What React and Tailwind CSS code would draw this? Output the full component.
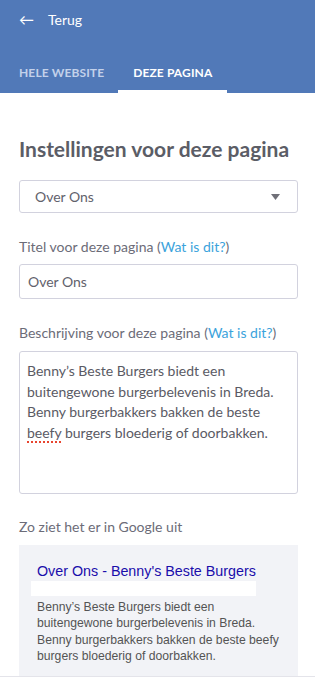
const LINK = "text-[#3ba3dc]";

function Label({ children }) {
  return (
    <p className="text-[14px] leading-5 text-[#6c6c78]">
      {children} (<span className={LINK}>Wat is dit?</span>)
    </p>
  );
}

export default function App() {
  return (
    <div className="w-[315px] min-h-[679px] bg-white font-['Lato',sans-serif]">
      {/* Header */}
      <div className="bg-[#5179b8] h-[93px] flex flex-col">
        <div className="flex items-center h-[38px] pl-[19px] text-white">
          <span className="text-[15px] w-[29px] leading-none">←</span>
          <span className="text-[14px]">Terug</span>
        </div>
        <div className="flex mt-auto h-[40px] text-[12px] font-bold tracking-[0.01em]">
          <div className="pl-[19px] pr-[14px] flex items-center text-[#c3d1ea]">HELE WEBSITE</div>
          <div className="relative flex items-center px-[15px] text-white">
            DEZE PAGINA
            <span className="absolute left-0 right-0 bottom-0 h-[3px] bg-white" />
          </div>
        </div>
      </div>

      {/* Body */}
      <div className="pl-[19px] pr-[17px] pt-[44px]">
        <h1 className="text-[21px] font-bold text-[#5b5d66] leading-6">Instellingen voor deze pagina</h1>

        <div className="mt-[19px] h-[33px] border border-[#d2d2de] rounded-[3px] flex items-center justify-between pl-[15px] pr-[17px]">
          <span className="text-[14px] text-[#62626c]">Over Ons</span>
          <svg width="9" height="6" viewBox="0 0 9 6"><path d="M0 0h9L4.5 6z" fill="#707078" /></svg>
        </div>

        <div className="mt-[24px]">
          <Label>Titel voor deze pagina</Label>
        </div>
        <div className="mt-[7px] h-[35px] border border-[#d2d2de] rounded-[3px] flex items-center pl-[8px]">
          <span className="text-[14px] text-[#62626c]">Over Ons</span>
        </div>

        <div className="mt-[24px]">
          <Label>Beschrijving voor deze pagina</Label>
        </div>
        <div className="mt-[8px] h-[143px] border border-[#d2d2de] rounded-[3px] px-[7px] pt-[9px] text-[14px] leading-[20.5px] text-[#5a5a64]">
          Benny’s Beste Burgers biedt een buitengewone burgerbelevenis in Breda. Benny burgerbakkers bakken de beste{" "}
          <span className="border-b-2 border-dotted border-[#e8452f]">beefy</span> burgers bloederig of doorbakken.
        </div>

        <p className="mt-[23px] text-[14px] text-[#6c6c78] leading-5">Zo ziet het er in Google uit</p>

        <div className="mt-[8px] bg-[#f2f3f7] h-[131px] pl-[12px] pt-[17px] font-['Liberation_Sans',Arial,sans-serif]">
          <p className="pl-[6px] text-[14.3px] leading-[19px] text-[#1a0dab]">Over Ons - Benny's Beste Burgers</p>
          <div className="w-[225px] h-[15px] bg-white" />
          <p className="pl-[6px] pr-[14px] mt-[3px] text-[12.2px] leading-[16.3px] text-[#545454]">
            Benny’s Beste Burgers biedt een buitengewone burgerbelevenis in Breda. Benny burgerbakkers bakken de beste beefy burgers bloederig of doorbakken.
          </p>
        </div>
      </div>
      <div className="border-t border-[#e4e4ea]" />
    </div>
  );
}
